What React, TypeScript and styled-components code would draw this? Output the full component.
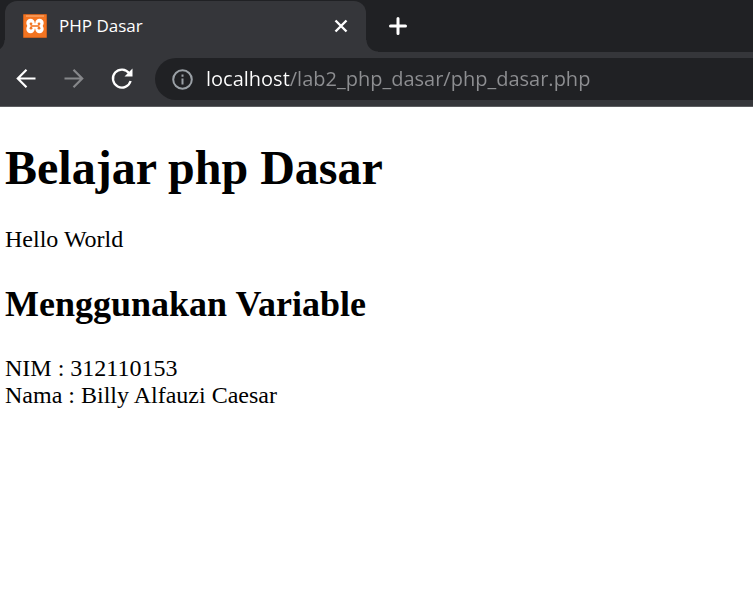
import React from "react";
import styled, { createGlobalStyle } from "styled-components";

const GlobalStyle = createGlobalStyle`
  *, *::before, *::after { box-sizing: border-box; }
  body { margin: 0; background: #fff; }
`;

const UI_FONT = `"Open Sans", "Noto Sans", sans-serif`;

const Browser = styled.div`
  display: flex;
  flex-direction: column;
  min-height: 100vh;
  overflow-x: hidden;
`;

const TabStrip = styled.div`
  display: flex;
  align-items: stretch;
  height: 52px;
  padding: 1px 0 0 5px;
  background: #202124;
`;

const Tab = styled.div`
  position: relative;
  display: flex;
  align-items: center;
  flex: 0 1 361px;
  min-width: 0;
  padding: 0 12px 2px 18px;
  gap: 12px;
  border-radius: 12px 12px 0 0;
  background: #35363a;

  &::before,
  &::after {
    content: "";
    position: absolute;
    bottom: 0;
    width: 12px;
    height: 12px;
  }
  &::before {
    right: 100%;
    background: radial-gradient(circle at 0 0, transparent 11px, #35363a 12px);
  }
  &::after {
    left: 100%;
    background: radial-gradient(circle at 100% 0, transparent 11px, #35363a 12px);
  }
`;

const TabTitle = styled.span`
  flex: 1;
  min-width: 0;
  overflow: hidden;
  white-space: nowrap;
  color: #fff;
  font: 17px/24px ${UI_FONT};
`;

const IconButton = styled.button<{ $size: number }>`
  display: flex;
  align-items: center;
  justify-content: center;
  flex: none;
  width: ${(p) => p.$size}px;
  height: ${(p) => p.$size}px;
  padding: 0;
  border: 0;
  border-radius: 50%;
  background: transparent;
  color: #fff;

  &:disabled { color: #86878a; }
`;

const NewTab = styled(IconButton)`
  margin: 7px 0 0 14px;
`;

const Toolbar = styled.div`
  display: flex;
  align-items: center;
  height: 55px;
  padding-left: 8px;
  border-bottom: 1px solid #5c5d60;
  background: #35363a;
`;

const NavButtons = styled.div`
  display: flex;
  gap: 12px;
  margin-right: 15px;
`;

const AddressBar = styled.form`
  display: flex;
  align-items: center;
  flex: 1;
  min-width: 0;
  height: 42px;
  padding-left: 9px;
  gap: 6px;
  border-radius: 21px 0 0 21px;
  background: #202124;

  ${IconButton} { color: #9aa0a6; }
`;

const Address = styled.input`
  flex: 1;
  min-width: 0;
  height: 32px;
  padding: 0;
  border: 0;
  outline: 0;
  font: 20px/32px ${UI_FONT};
  color: transparent;
  caret-color: #fff;
  background: linear-gradient(to right, #fff 84px, #8e8f92 84px);
  background-clip: text;
  -webkit-background-clip: text;
`;

const Page = styled.main`
  display: flow-root;
  flex: 1;
  padding: 0 6px 12px 5px;
  background: #fff;
  color: #000;
  font: 24px/27px "Liberation Serif", "Times New Roman", serif;
`;

const Title = styled.h1`
  margin: 32px 0 30px;
  font-size: 48px;
  line-height: 57px;
`;

const Subtitle = styled.h2`
  margin: 30px 0 29px;
  font-size: 36px;
  line-height: 43px;
`;

const XamppIcon = () => (
  <svg width="24" height="24" viewBox="0 0 24 24" fill="none" aria-hidden="true">
    <rect width="24" height="24" rx="1" fill="#c9601f" />
    <rect x="1" y="1" width="22" height="22" fill="#f37421" />
    <path d="M3 2h18" stroke="#f9b583" strokeWidth="1" />
    <g fill="#fff">
      <circle cx="7.500" cy="9" r="4.200" />
      <circle cx="16.500" cy="9" r="4.200" />
      <circle cx="7.500" cy="15" r="4.200" />
      <circle cx="16.500" cy="15" r="4.200" />
      <rect x="4.500" y="9.300" width="15" height="5.400" />
    </g>
    <g fill="#f37421">
      <circle cx="8" cy="9.800" r="1.400" />
      <circle cx="16" cy="9.800" r="1.400" />
      <circle cx="8" cy="14.200" r="1.400" />
      <circle cx="16" cy="14.200" r="1.400" />
      <path d="M7.500 11.200h9v1.600h-9z" />
    </g>
  </svg>
);

const CloseIcon = () => (
  <svg width="14" height="14" viewBox="0 0 14 14" stroke="currentColor" strokeWidth="2.400" aria-hidden="true">
    <path d="M1.500 1.500l11 11M12.500 1.500l-11 11" />
  </svg>
);

const PlusIcon = () => (
  <svg width="18" height="18" viewBox="0 0 18 18" stroke="currentColor" strokeWidth="3" strokeLinecap="round" aria-hidden="true">
    <path d="M9 1.500v15M1.500 9h15" />
  </svg>
);

const BackIcon = () => (
  <svg width="20" height="20" viewBox="0 0 20 20" fill="none" stroke="currentColor" strokeWidth="2.200" aria-hidden="true">
    <path d="M19.500 9.500H1.800M10.500 0.800L1.800 9.500l8.700 8.700" />
  </svg>
);

const ForwardIcon = () => (
  <svg width="20" height="20" viewBox="0 0 20 20" fill="none" stroke="currentColor" strokeWidth="2.200" aria-hidden="true">
    <path d="M0.500 9.500h17.700M9.500 0.800l8.700 8.700-8.700 8.700" />
  </svg>
);

const ReloadIcon = () => (
  <svg width="22" height="22" viewBox="0 0 22 22" fill="none" aria-hidden="true">
    <path d="M18.200 5.200A9 9 0 1 0 19.600 13" stroke="currentColor" strokeWidth="2.300" />
    <path d="M21.500 0.500v8h-8z" fill="currentColor" />
  </svg>
);

const InfoIcon = () => (
  <svg width="22" height="22" viewBox="0 0 22 22" fill="none" stroke="currentColor" strokeWidth="2" aria-hidden="true">
    <circle cx="11.500" cy="11.500" r="9.300" />
    <path d="M11.500 10.500v6M11.500 6.500v2.200" />
  </svg>
);

export default function App() {
  return (
    <Browser>
      <GlobalStyle />
      <TabStrip>
        <Tab>
          <XamppIcon />
          <TabTitle>PHP Dasar</TabTitle>
          <IconButton type="button" $size={26} aria-label="Close tab">
            <CloseIcon />
          </IconButton>
        </Tab>
        <NewTab type="button" $size={36} aria-label="New tab">
          <PlusIcon />
        </NewTab>
      </TabStrip>
      <Toolbar>
        <NavButtons>
          <IconButton type="button" $size={36} aria-label="Back">
            <BackIcon />
          </IconButton>
          <IconButton type="button" $size={36} aria-label="Forward" disabled>
            <ForwardIcon />
          </IconButton>
          <IconButton type="button" $size={36} aria-label="Reload">
            <ReloadIcon />
          </IconButton>
        </NavButtons>
        <AddressBar onSubmit={(e) => e.preventDefault()}>
          <IconButton type="button" $size={36} aria-label="View site information">
            <InfoIcon />
          </IconButton>
          <Address
            type="text"
            aria-label="Address"
            spellCheck={false}
            defaultValue="localhost/lab2_php_dasar/php_dasar.php"
          />
        </AddressBar>
      </Toolbar>
      <Page>
        <Title>Belajar php Dasar</Title>
        <div>Hello World</div>
        <Subtitle>Menggunakan Variable</Subtitle>
        <div>
          NIM : 312110153
          <br />
          Nama : Billy Alfauzi Caesar
        </div>
      </Page>
    </Browser>
  );
}
